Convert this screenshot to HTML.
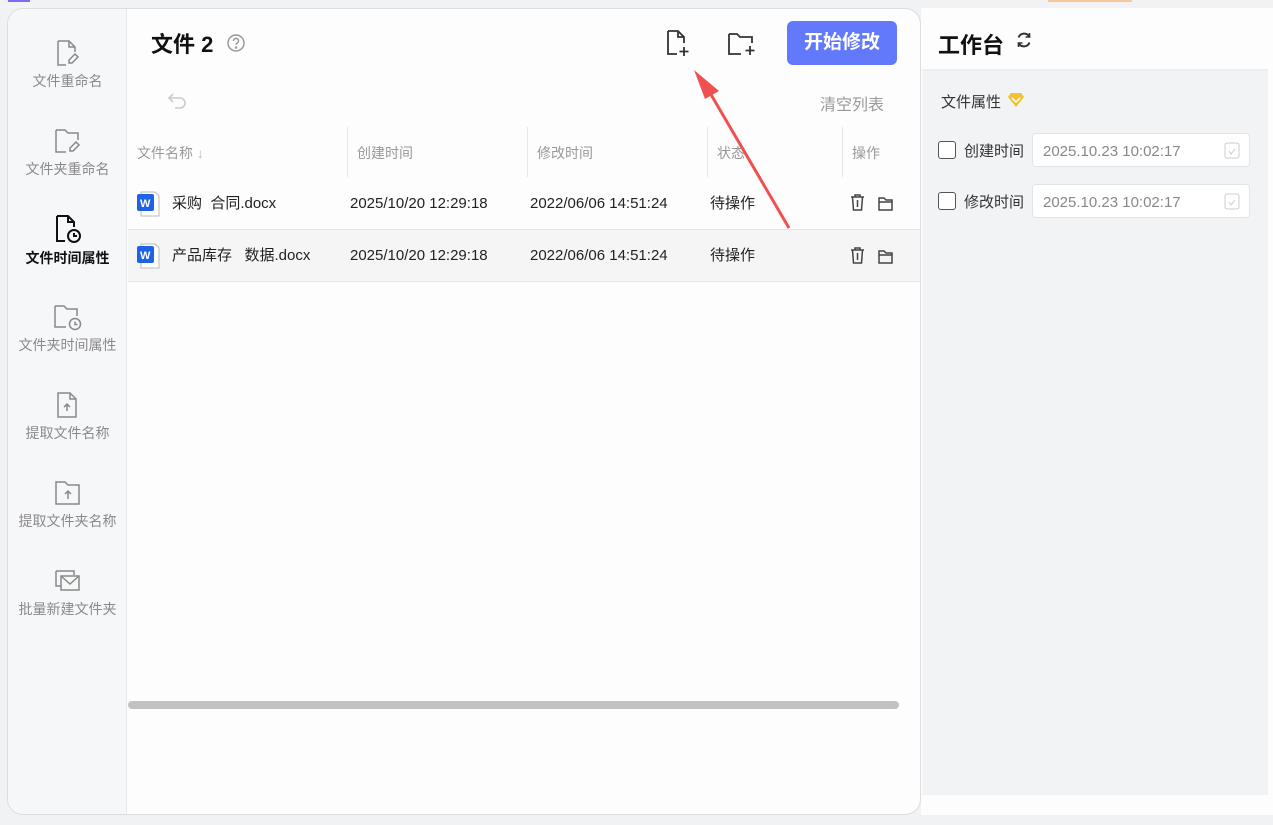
<!DOCTYPE html>
<html><head><meta charset="utf-8"><style>
*{margin:0;padding:0;box-sizing:border-box}
body{width:1273px;height:825px;background:#f1f2f4;font-family:"Liberation Sans","Noto Sans CJK SC",sans-serif;position:relative;overflow:hidden;color:#222}
.abs{position:absolute}
.main{left:7px;top:8px;width:914px;height:807px;background:#fdfdfd;border:1px solid #dcdde0;border-radius:16px;overflow:hidden}
.side{left:0;top:0;width:119px;height:100%;background:#f6f7f9;border-right:1px solid #e4e6ea}
.si{position:absolute;left:0;width:119px;text-align:center;font-size:14px;color:#8a8a8a}
.si svg{display:block;margin:0 auto 4px}
.th{font-size:14px;color:#999;top:134px}
.sep{width:1px;height:50px;background:#e6e6e6;top:118px}
.row{left:120px;width:794px;height:53px}
.cell{font-size:15px;color:#222;top:17px;line-height:20px;height:20px}
.right{left:921px;top:8px;width:352px;height:807px;background:#fdfdfd}
.gray{left:922px;top:69px;width:346px;height:726px;background:#f2f3f5;border-top:2px solid #eceef0}
.inp{width:218px;height:34px;background:#fff;border:1px solid #e3e4e7;border-radius:4px;font-size:15px;color:#888;padding:0 10px;line-height:35px}
.cb{width:18px;height:18px;border:1.5px solid #555;border-radius:3px;background:#fff}
</style></head><body>
<div class="abs" style="left:8px;top:0;width:22px;height:2px;background:#7b6cf6"></div>
<div class="abs" style="left:1048px;top:0;width:84px;height:2px;background:#f5c89a"></div>
<div class="abs main">
 <div class="abs side">
  <div class="si" style="top:30px"><svg width="26" height="28" viewBox="0 0 26 28" fill="none" stroke="#888" stroke-width="1.5"><path d="M3 2h11l6 6v5M3 2v24h8"/><path d="M14 2v6h6"/><path d="M20 15l3 3-6 6h-3v-3z"/></svg>文件重命名</div>
  <div class="si" style="top:118px"><svg width="28" height="28" viewBox="0 0 28 28" fill="none" stroke="#888" stroke-width="1.5"><path d="M2 3h9l3 3h10v7M2 3v22h10"/><path d="M22 15l3 3-6 6h-3v-3z"/></svg>文件夹重命名</div>
  <div class="si" style="top:205px;color:#111;font-weight:bold"><svg width="28" height="30" viewBox="0 0 28 30" fill="none" stroke="#111" stroke-width="2"><path d="M3 2h11l6 6v5M3 2v25h8"/><path d="M14 2v6h6"/><circle cx="20" cy="22" r="6"/><path d="M20 19v3h3"/></svg>文件时间属性</div>
  <div class="si" style="top:294px"><svg width="30" height="28" viewBox="0 0 30 28" fill="none" stroke="#888" stroke-width="1.5"><path d="M2 3h9l3 3h10v7M2 3v21h11"/><circle cx="22" cy="21" r="5.5"/><path d="M22 18.5v3h2.5"/></svg>文件夹时间属性</div>
  <div class="si" style="top:382px"><svg width="26" height="28" viewBox="0 0 26 28" fill="none" stroke="#888" stroke-width="1.5"><path d="M3 2h12l6 6v18H3z"/><path d="M15 2v6h6"/><path d="M12 20v-7M9 16l3-3 3 3"/></svg>提取文件名称</div>
  <div class="si" style="top:470px"><svg width="28" height="28" viewBox="0 0 28 28" fill="none" stroke="#888" stroke-width="1.5"><path d="M2 3h9l3 3h11v19H2z"/><path d="M14 20v-8M11 15l3-3 3 3"/></svg>提取文件夹名称</div>
  <div class="si" style="top:558px"><svg width="30" height="28" viewBox="0 0 30 28" fill="none" stroke="#888" stroke-width="1.5"><path d="M3 4h18v4M3 4v15h5"/><rect x="8" y="9" width="18" height="14"/><path d="M8 9l9 8 9-8"/></svg>批量新建文件夹</div>
 </div>
 <div class="abs" style="left:143px;top:18px;font-size:22px;font-weight:bold;color:#111">文件 2</div>
 <svg class="abs" style="left:218px;top:24px" width="20" height="20" viewBox="0 0 20 20" fill="none" stroke="#999" stroke-width="1.5"><circle cx="10" cy="10" r="8"/><path d="M7.5 8a2.5 2.5 0 1 1 3.5 2.2c-.7.4-1 .8-1 1.6"/><circle cx="10" cy="14.5" r=".5" fill="#999"/></svg>
 <svg class="abs" style="left:657px;top:20px" width="26" height="30" viewBox="0 0 26 30" fill="none" stroke="#333" stroke-width="1.8"><path d="M3 2h10l6 6v6M3 2v23h9"/><path d="M13 2v6h6"/><path d="M19 18v9M14.5 22.5h9"/></svg>
 <svg class="abs" style="left:718px;top:22px" width="32" height="28" viewBox="0 0 32 28" fill="none" stroke="#333" stroke-width="1.8"><path d="M3 3h8l3 3h12v6M3 3v20h12"/><path d="M24 15v9M19.5 19.5h9"/></svg>
 <div class="abs" style="left:779px;top:12px;width:110px;height:44px;background:#6279fb;border-radius:6px;color:#fff;font-size:19px;font-weight:bold;text-align:center;line-height:44px">开始修改</div>
 <svg class="abs" style="left:159px;top:82px" width="22" height="20" viewBox="0 0 22 20" fill="none" stroke="#ccc" stroke-width="1.6"><path d="M6 3L2 7l4 4"/><path d="M2 7h11a5 5 0 0 1 0 10H8"/></svg>
 <div class="abs" style="left:812px;top:82px;font-size:16px;color:#999">清空列表</div>
 <div class="abs th" style="left:129px">文件名称 <span style="color:#bbb">↓</span></div>
 <div class="abs sep" style="left:339px"></div><div class="abs th" style="left:349px">创建时间</div>
 <div class="abs sep" style="left:519px"></div><div class="abs th" style="left:529px">修改时间</div>
 <div class="abs sep" style="left:699px"></div><div class="abs th" style="left:709px">状态</div>
 <div class="abs sep" style="left:834px"></div><div class="abs th" style="left:844px">操作</div>
 <div class="abs row" style="top:168px">
  <svg class="abs" style="left:8px;top:14px" width="26" height="26" viewBox="0 0 26 26"><path d="M5 1h14l4 4v20H5z" fill="#fff" stroke="#bbb"/><rect x="1" y="3" width="17" height="17" rx="2" fill="#1e63e6"/><text x="4" y="16" font-size="11" font-weight="bold" fill="#fff" font-family="Liberation Sans">W</text></svg>
  <div class="abs cell" style="left:44px">采购&nbsp; 合同.docx</div>
  <div class="abs cell" style="left:222px">2025/10/20 12:29:18</div>
  <div class="abs cell" style="left:402px">2022/06/06 14:51:24</div>
  <div class="abs cell" style="left:582px">待操作</div>
 </div>
 <div class="abs row" style="top:220px;background:#f5f5f6;border-top:1px solid #e6e6e6;border-bottom:1px solid #e6e6e6">
  <svg class="abs" style="left:8px;top:13px" width="26" height="26" viewBox="0 0 26 26"><path d="M5 1h14l4 4v20H5z" fill="#fff" stroke="#bbb"/><rect x="1" y="3" width="17" height="17" rx="2" fill="#1e63e6"/><text x="4" y="16" font-size="11" font-weight="bold" fill="#fff" font-family="Liberation Sans">W</text></svg>
  <div class="abs cell" style="left:44px;top:16px">产品库存&nbsp;&nbsp; 数据.docx</div>
  <div class="abs cell" style="left:222px;top:16px">2025/10/20 12:29:18</div>
  <div class="abs cell" style="left:402px;top:16px">2022/06/06 14:51:24</div>
  <div class="abs cell" style="left:582px;top:16px">待操作</div>
 </div>
 <svg class="abs" style="left:840px;top:184px" width="60" height="100" viewBox="0 0 60 100" fill="none" stroke="#444" stroke-width="1.5">
  <path d="M3 4h13M7 4V2h5v2M4.5 4l1 13h8l1-13M9.5 7v7"/><path d="M31 5h5l2 2h6v10H31z"/><path d="M31 9h13"/>
  <g transform="translate(0,53)"><path d="M3 4h13M7 4V2h5v2M4.5 4l1 13h8l1-13M9.5 7v7"/><path d="M31 5h5l2 2h6v10H31z"/><path d="M31 9h13"/></g>
 </svg>
 <div class="abs" style="left:120px;top:692px;width:771px;height:8px;background:#c1c1c1;border-radius:4px"></div>
</div>
<div class="abs right"></div>
<div class="abs" style="left:938px;top:28px;font-size:22px;font-weight:bold;color:#111">工作台</div>
<svg class="abs" style="left:1015px;top:31px" width="18" height="18" viewBox="0 0 18 18" fill="none" stroke="#333" stroke-width="2"><path d="M14.5 6A6 6 0 0 0 3.5 6.5M3.5 12a6 6 0 0 0 11-.5"/><path d="M14.5 2v4h-4M3.5 16v-4h4" stroke-width="1.6"/></svg>
<div class="abs gray"></div>
<div class="abs" style="left:941px;top:91px;font-size:15px;color:#333">文件属性</div>
<svg class="abs" style="left:1007px;top:92px" width="18" height="16" viewBox="0 0 18 16"><path d="M1 5l3-4h10l3 4-8 10z" fill="#f2c230"/><path d="M5 6l4 4 4-4" stroke="#fff" stroke-width="1.5" fill="none"/></svg>
<div class="abs cb" style="left:938px;top:141px"></div>
<div class="abs" style="left:964px;top:140px;font-size:15px;color:#333">创建时间</div>
<div class="abs inp" style="left:1032px;top:133px">2025.10.23 10:02:17</div>
<div class="abs cb" style="left:938px;top:192px"></div>
<div class="abs" style="left:964px;top:191px;font-size:15px;color:#333">修改时间</div>
<div class="abs inp" style="left:1032px;top:184px">2025.10.23 10:02:17</div>
<svg class="abs" style="left:1224px;top:141px" width="16" height="18" viewBox="0 0 16 18" fill="none" stroke="#ccc"><rect x="1" y="2" width="14" height="15" rx="2"/><path d="M5 10l2 3 4-5"/></svg>
<svg class="abs" style="left:1224px;top:192px" width="16" height="18" viewBox="0 0 16 18" fill="none" stroke="#ccc"><rect x="1" y="2" width="14" height="15" rx="2"/><path d="M5 10l2 3 4-5"/></svg>
<svg class="abs" style="left:0;top:0" width="1273" height="825"><path d="M789 228L706 86" stroke="#f05050" stroke-width="3"/><path d="M694 70l25 21-14 8z" fill="#f05050"/></svg>
</body></html>
